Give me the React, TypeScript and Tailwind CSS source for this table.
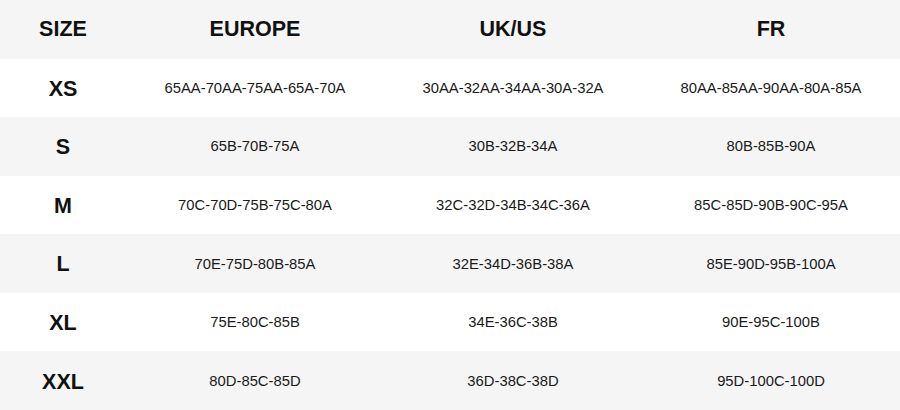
const HEADERS = ['SIZE', 'EUROPE', 'UK/US', 'FR']

const ROWS = [
  ['XS', '65AA-70AA-75AA-65A-70A', '30AA-32AA-34AA-30A-32A', '80AA-85AA-90AA-80A-85A'],
  ['S', '65B-70B-75A', '30B-32B-34A', '80B-85B-90A'],
  ['M', '70C-70D-75B-75C-80A', '32C-32D-34B-34C-36A', '85C-85D-90B-90C-95A'],
  ['L', '70E-75D-80B-85A', '32E-34D-36B-38A', '85E-90D-95B-100A'],
  ['XL', '75E-80C-85B', '34E-36C-38B', '90E-95C-100B'],
  ['XXL', '80D-85C-85D', '36D-38C-38D', '95D-100C-100D'],
]

export default function App() {
  return (
    <div
      className="w-[900px] h-[410px] flex flex-col bg-white text-[#111]"
      style={{ fontFamily: '"Liberation Sans", Arial, sans-serif' }}
    >
      {/* header */}
      <div className="flex-1 grid grid-cols-[126px_1fr_1fr_1fr] items-center bg-[#f5f5f5]">
        {HEADERS.map((h) => (
          <div key={h} className="text-center text-[21.5px] font-bold">
            {h}
          </div>
        ))}
      </div>
      {ROWS.map((row, i) => (
        <div
          key={row[0]}
          className={`flex-1 grid grid-cols-[126px_1fr_1fr_1fr] items-center ${
            i % 2 === 0 ? 'bg-white' : 'bg-[#f5f5f5]'
          }`}
        >
          <div className="text-center text-[21.5px] font-bold pt-[2px]">{row[0]}</div>
          {row.slice(1).map((v, j) => (
            <div key={j} className="text-center text-[14.8px] text-[#1a1a1a]">
              {v}
            </div>
          ))}
        </div>
      ))}
    </div>
  )
}
